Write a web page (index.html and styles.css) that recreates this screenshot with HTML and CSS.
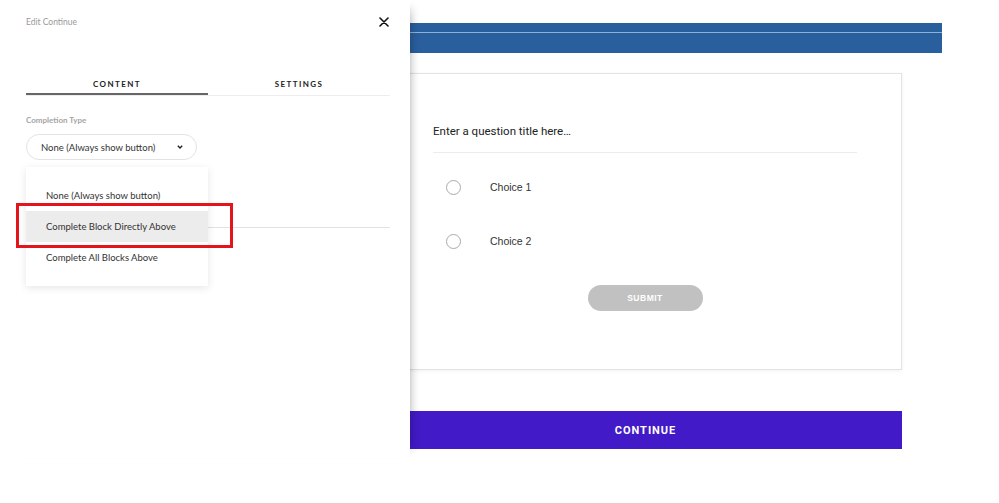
FILE: index.html
```html
<!DOCTYPE html>
<html>
<head>
<meta charset="utf-8">
<link rel="stylesheet" href="styles.css">
</head>
<body>
<div class="page">
  <main class="content">
    <div class="banner"><div class="banner-line"></div></div>
    <section class="card">
      <div class="q-title">Enter a question title here…</div>
      <div class="q-divider"></div>
      <div class="choice"><span class="radio"></span><span class="choice-label">Choice 1</span></div>
      <div class="choice"><span class="radio"></span><span class="choice-label">Choice 2</span></div>
      <div class="submit-row"><button class="submit">SUBMIT</button></div>
    </section>
    <button class="continue">CONTINUE</button>
  </main>

  <aside class="panel">
    <header class="panel-head">
      <span class="panel-title">Edit Continue</span>
      <svg class="close" width="10" height="10" viewBox="0 0 10 10"><path d="M1 1L9 9M9 1L1 9" stroke="#111" stroke-width="1.6" stroke-linecap="round"/></svg>
    </header>
    <nav class="tabs">
      <div class="tab active">CONTENT</div>
      <div class="tab">SETTINGS</div>
    </nav>
    <div class="field-label">Completion Type</div>
    <div class="select">
      <span>None (Always show button)</span>
      <svg class="chev" width="6" height="4" viewBox="0 0 6 4"><path d="M0.8 0.8L3 3L5.2 0.8" fill="none" stroke="#222" stroke-width="1.4"/></svg>
    </div>
    <div class="panel-divider"></div>

    <ul class="menu">
      <li>None (Always show button)</li>
      <li class="hover">Complete Block Directly Above</li>
      <li>Complete All Blocks Above</li>
    </ul>
    <div class="highlight"></div>
  </aside>
</div>
</body>
</html>
```

FILE: styles.css
```css
* { box-sizing: border-box; }
html, body { margin: 0; padding: 0; background: #fff; }
body { width: 999px; height: 503px; overflow: hidden; }

.page { position: relative; width: 999px; height: 503px; }

.content {
  padding: 23px 0 0 389px;
  display: flex;
  flex-direction: column;
  align-items: flex-start;
}

.banner {
  width: 553px;
  height: 30px;
  background: #2a5f9e;
  padding-top: 9px;
  margin-bottom: 20px;
}
.banner-line { height: 1px; background: #8fb0d8; }

.card {
  width: 513px;
  height: 297px;
  border: 1px solid #e3e3e3;
  box-shadow: 0 1px 4px rgba(0,0,0,0.06);
  padding: 49px 44px 0 43px;
  background: #fff;
}
.q-title {
  font-family: Roboto, "Open Sans", sans-serif;
  font-size: 11.5px;
  line-height: 16px;
  color: #222;
}
.q-divider { height: 1px; background: #ececec; margin-top: 13px; margin-bottom: 7px; }
.choice {
  height: 54px;
  display: flex;
  align-items: center;
}
.radio {
  width: 15px; height: 15px;
  border: 1px solid #aaa;
  border-radius: 50%;
  margin-left: 13px;
  margin-right: 29px;
}
.choice-label {
  font-family: "Liberation Sans", Arial, sans-serif;
  font-size: 10.5px;
  color: #333;
}
.submit-row { display: flex; justify-content: center; margin-top: 17px; }
.submit {
  width: 115px; height: 26px;
  border: none;
  border-radius: 13px;
  background: #c1c1c1;
  color: #fff;
  font-family: "Liberation Sans", Arial, sans-serif;
  font-weight: 700;
  font-size: 8.5px;
  letter-spacing: 0.5px;
  padding: 0;
}

.continue {
  margin-top: 41px;
  width: 513px; height: 38px;
  border: none;
  background: #421ac7;
  color: #fff;
  font-family: Roboto, sans-serif;
  font-weight: 700;
  font-size: 11px;
  letter-spacing: 1px;
  padding: 0;
}

/* side drawer overlay */
.panel {
  position: absolute;
  left: 0; top: 0;
  width: 410px; height: 458px;
  background: #fff;
  box-shadow: 9px 0 10px -10px rgba(0,0,0,0.4);
  padding: 0 20px 0 26px;
  font-family: Lato, "Open Sans", sans-serif;
}
.panel-head {
  height: 43px;
  display: flex;
  justify-content: space-between;
  align-items: center;
  padding-right: 1px;
}
.panel-title { font-size: 8.5px; color: #9a9a9a; }
.close { display: block; }

.tabs {
  margin-top: 33px;
  display: flex;
  border-bottom: 1px solid #ededed;
}
.tab {
  flex: 1;
  text-align: center;
  font-size: 8px;
  font-weight: 700;
  letter-spacing: 1.4px;
  color: #222;
  height: 19px;
  line-height: 16px;
}
.tab.active { border-bottom: 2px solid #666; margin-bottom: -1px; }

.field-label {
  margin-top: 19px;
  font-size: 8px;
  font-weight: 700;
  color: #a5a5a5;
  line-height: 10px;
}
.select {
  margin-top: 9px;
  width: 171px; height: 26px;
  border: 1px solid #e3e3e3;
  border-radius: 13px;
  display: flex;
  align-items: center;
  justify-content: space-between;
  padding: 0 13px 0 14px;
  font-size: 9.5px;
  color: #333;
}
.chev { display: block; }
.panel-divider { margin-top: 67px; height: 1px; background: #e2e2e2; }

.menu {
  position: absolute;
  left: 26px; top: 167px;
  width: 182px;
  margin: 0;
  padding: 13px 0;
  list-style: none;
  background: #fff;
  box-shadow: 0 2px 8px rgba(0,0,0,0.10);
}
.menu li {
  height: 31px;
  line-height: 32px;
  padding-left: 20px;
  font-size: 9.5px;
  color: #333;
}
.menu li.hover { background: #ececec; }

.highlight {
  position: absolute;
  left: 16px; top: 203px;
  width: 217px; height: 45px;
  border: 3px solid #e5131b;
}
```
